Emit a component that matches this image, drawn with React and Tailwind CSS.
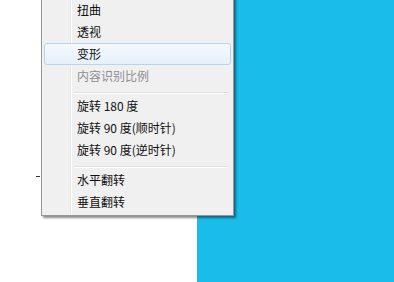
const FONT = { fontFamily: '"Segoe UI", "Noto Sans CJK SC", "Liberation Sans", sans-serif' }

const ITEMS = [
  { label: '扭曲' },
  { label: '透视' },
  { label: '变形', active: true },
  { label: '内容识别比例', disabled: true },
  { sep: true },
  { label: '旋转 180 度' },
  { label: '旋转 90 度(顺时针)' },
  { label: '旋转 90 度(逆时针)' },
  { sep: true },
  { label: '水平翻转' },
  { label: '垂直翻转' },
]

function MenuItem({ item }) {
  if (item.sep) {
    return (
      <div className="h-[8px] flex flex-col justify-center pt-[3px] pl-[30px] pr-[3px]">
        <div className="h-px bg-[#e0e0e0]" />
        <div className="h-px bg-white" />
      </div>
    )
  }
  return (
    <div
      className={
        'h-[22px] flex items-center pl-[32px] text-[12px] border rounded-[3px] ' +
        (item.active
          ? 'border-[#b6d4f2] bg-gradient-to-b from-[#f4f9fe] to-[#e6f0fb]'
          : 'border-transparent') +
        (item.disabled ? ' text-[#8d8d8d]' : ' text-[#111]')
      }
    >
      {item.label}
    </div>
  )
}

export default function App() {
  return (
    <div className="relative w-[394px] h-[282px] overflow-hidden bg-white flex" style={FONT}>
      <div className="w-[197px] shrink-0" />
      <div className="flex-1 bg-[#1abce9]" />

      {/* small mark left of the menu */}
      <div className="absolute left-[36px] top-[176px] w-[4px] h-px bg-[#333]" />

      {/* context menu */}
      <div className="absolute left-[41px] top-[-4px] w-[193px] border border-[#979797] bg-[#f0f0f0] px-[2px] py-[2px] shadow-[2px_2px_2px_rgba(0,0,0,0.45)]">
        <div className="absolute left-[28px] top-0 bottom-0 w-px bg-[#e2e3e3]" />
        <div className="absolute left-[29px] top-0 bottom-0 w-px bg-white" />
        <div className="relative flex flex-col">
          {ITEMS.map((it, i) => (
            <MenuItem key={i} item={it} />
          ))}
        </div>
      </div>
    </div>
  )
}
